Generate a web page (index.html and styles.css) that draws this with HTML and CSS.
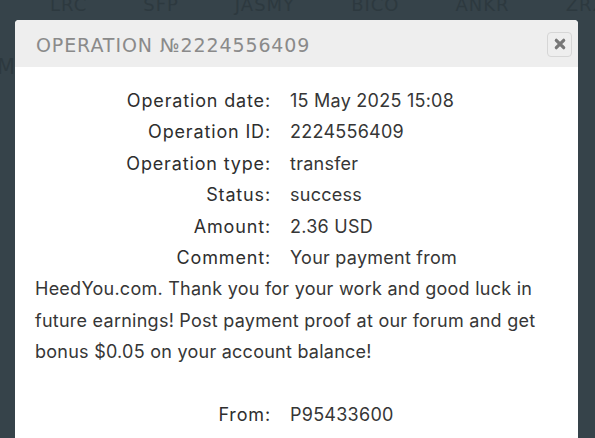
FILE: index.html
```html
<!DOCTYPE html>
<html>
<head>
<meta charset="utf-8">
<link rel="stylesheet" href="styles.css">
</head>
<body>
<div class="backdrop">
  <div class="tickers">
    <span class="tk">LRC</span><span class="tk">SFP</span><span class="tk">JASMY</span><span class="tk">BICO</span><span class="tk">ANKR</span><span class="tk">ZRX</span>
  </div>
  <div class="tickers second">
    <span class="tk">MINA</span>
  </div>
</div>
<div class="modal">
  <div class="modal-head">
    <div class="title">OPERATION №2224556409</div>
    <button class="close" type="button" aria-label="close">
      <svg width="12" height="12" viewBox="0 0 12 12"><path d="M2.3 2.3 L9.7 9.7 M9.7 2.3 L2.3 9.7" stroke="#777777" stroke-width="3.2" stroke-linecap="round"/></svg>
    </button>
  </div>
  <div class="modal-body">
    <div class="row"><span class="lbl">Operation date:</span><span class="val">15 May 2025 15:08</span></div>
    <div class="row"><span class="lbl">Operation ID:</span><span class="val">2224556409</span></div>
    <div class="row"><span class="lbl">Operation type:</span><span class="val">transfer</span></div>
    <div class="row"><span class="lbl">Status:</span><span class="val">success</span></div>
    <div class="row"><span class="lbl">Amount:</span><span class="val">2.36 USD</span></div>
    <div class="row"><span class="lbl">Comment:</span><span class="val">Your payment from HeedYou.com. Thank you for your work and good luck in future earnings! Post payment proof at our forum and get bonus $0.05 on your account balance!</span></div>
    <div class="row spaced"><span class="lbl">From:</span><span class="val">P95433600</span></div>
  </div>
</div>
</body>
</html>
```

FILE: styles.css
```css
html, body {
  margin: 0;
  padding: 0;
}
body {
  background: #36434a;
  width: 595px;
  height: 438px;
  overflow: hidden;
}
.tickers {
  display: flex;
  gap: 56px;
  font-family: "DejaVu Sans", sans-serif;
  font-size: 18px;
  letter-spacing: 1px;
  color: #2d393f;
  line-height: 20px;
  margin-top: -5px;
  padding-left: 50px;
  white-space: nowrap;
}
.tk {
  flex: none;
}
.tickers.second {
  margin-top: 42px;
  padding-left: 0;
  margin-left: -3px;
  font-size: 21px;
}
.modal {
  position: fixed;
  top: 20px;
  left: 15px;
  width: 563px;
  height: 440px;
  background: #ffffff;
  border-radius: 4px 4px 0 0;
  overflow: hidden;
}
.modal-head {
  height: 47px;
  background: #eeeeee;
  display: flex;
  align-items: center;
  justify-content: space-between;
  padding: 0 6px 0 21px;
}
.title {
  font-family: "DejaVu Sans", sans-serif;
  font-size: 19px;
  letter-spacing: 0.9px;
  color: #8a8a8a;
  padding-top: 2px;
}
.close {
  width: 25px;
  height: 25px;
  padding: 0;
  margin: 1px 0 0 0;
  border: 1px solid #d6d6d6;
  border-radius: 4px;
  background: #eeeeee;
  display: flex;
  align-items: center;
  justify-content: center;
}
.modal-body {
  padding: 18px 20px 0 20px;
  font-family: "Inter", sans-serif;
  font-size: 18px;
  line-height: 31.4px;
  color: #363636;
  letter-spacing: 0.25px;
}
.lbl {
  display: inline-block;
  width: 236px;
  text-align: right;
  padding-right: 19px;
  color: #2e2e2e;
  letter-spacing: 0.85px;
}
.spaced {
  margin-top: 31.4px;
}
```
